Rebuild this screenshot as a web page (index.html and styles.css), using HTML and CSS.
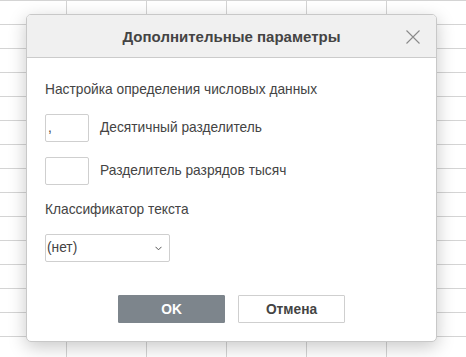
FILE: index.html
```html
<!DOCTYPE html>
<html lang="ru">
<head>
<meta charset="utf-8">
<title>Дополнительные параметры</title>
<link rel="stylesheet" href="styles.css">
</head>
<body>
<div class="sheet">
  <div class="dialog">
    <div class="header">
      <span class="title">Дополнительные параметры</span>
      <span class="close" aria-label="Закрыть">
        <svg width="14" height="14" viewBox="0 0 14 14"><path d="M0.5 0.5 L13.5 13.5 M13.5 0.5 L0.5 13.5" stroke="#8a8a8a" stroke-width="1.1" fill="none"/></svg>
      </span>
    </div>
    <div class="body">
      <div class="label first">Настройка определения числовых данных</div>
      <div class="row row1">
        <div class="input">,</div>
        <span class="row-label">Десятичный разделитель</span>
      </div>
      <div class="row row2">
        <div class="input"></div>
        <span class="row-label">Разделитель разрядов тысяч</span>
      </div>
      <div class="label third">Классификатор текста</div>
      <div class="select">
        <span>(нет)</span>
        <svg class="chev" width="7" height="5" viewBox="0 0 7 5"><path d="M0.5 0.8 L3.5 3.8 L6.5 0.8" stroke="#555" stroke-width="1" fill="none"/></svg>
      </div>
      <div class="buttons">
        <div class="btn primary">OK</div>
        <div class="btn">Отмена</div>
      </div>
    </div>
  </div>
</div>
</body>
</html>
```
FILE: styles.css
```css
html, body {
  margin: 0;
  padding: 0;
}
body {
  width: 466px;
  height: 357px;
  overflow: hidden;
  background-color: #fff;
  background-image:
    linear-gradient(to right, #d4d4d4 1px, transparent 1px),
    linear-gradient(to bottom, #d4d4d4 1px, transparent 1px);
  background-size: 80px 24px, 80px 24px;
  background-position: 66px 0, 0 0;
  font-family: "Liberation Sans", Arial, sans-serif;
  color: #444;
}
.sheet {
  padding: 14px 0 0 26px;
}
.dialog {
  width: 409px;
  height: 326px;
  border: 1px solid #c8c8c8;
  border-radius: 5px;
  background: #fff;
  box-shadow: 0 5px 18px rgba(0, 0, 0, 0.22);
  overflow: hidden;
  display: flex;
  flex-direction: column;
}
.header {
  height: 42px;
  flex: none;
  background: #f0f0f0;
  border-bottom: 1px solid #cbcbcb;
  display: flex;
  align-items: center;
  justify-content: center;
  position: relative;
}
.title {
  font-weight: bold;
  font-size: 15px;
  color: #444;
}
.close {
  position: absolute;
  right: 16px;
  top: 15px;
  width: 14px;
  height: 14px;
  display: block;
}
.close svg { display: block; }
.body {
  padding: 0 18px;
  display: flex;
  flex-direction: column;
  align-items: flex-start;
  font-size: 13.75px;
}
.label {
  line-height: 16px;
}
.label.first { margin-top: 24px; }
.row {
  display: flex;
  align-items: center;
}
.row1 { margin-top: 16px; }
.row2 { margin-top: 15.5px; }
.input {
  width: 40px;
  height: 25.5px;
  border: 1px solid #cfcfcf;
  border-radius: 2px;
  box-sizing: content-box;
  padding: 0 0 0 2px;
  line-height: 25px;
  font-size: 13.75px;
  color: #444;
}
.row-label {
  margin-left: 11px;
}
.label.third { margin-top: 17.5px; }
.select {
  margin-top: 16px;
  height: 25.5px;
  border: 1px solid #cfcfcf;
  border-radius: 2px;
  display: flex;
  align-items: center;
  justify-content: space-between;
  padding: 0 7px 0 1px;
  box-sizing: content-box;
  width: 115px;
  color: #444;
}
.chev { display: block; margin-top: 1px; }
.buttons {
  align-self: stretch;
  margin-top: 33.5px;
  display: flex;
  justify-content: center;
  gap: 13px;
}
.btn {
  width: 105px;
  height: 26px;
  border: 1px solid #cfcfcf;
  border-radius: 1px;
  display: flex;
  align-items: center;
  justify-content: center;
  font-weight: bold;
  font-size: 13.75px;
  color: #444;
  background: #fff;
}
.btn.primary {
  background: #7d858c;
  border-color: #7d858c;
  color: #fff;
}
```
